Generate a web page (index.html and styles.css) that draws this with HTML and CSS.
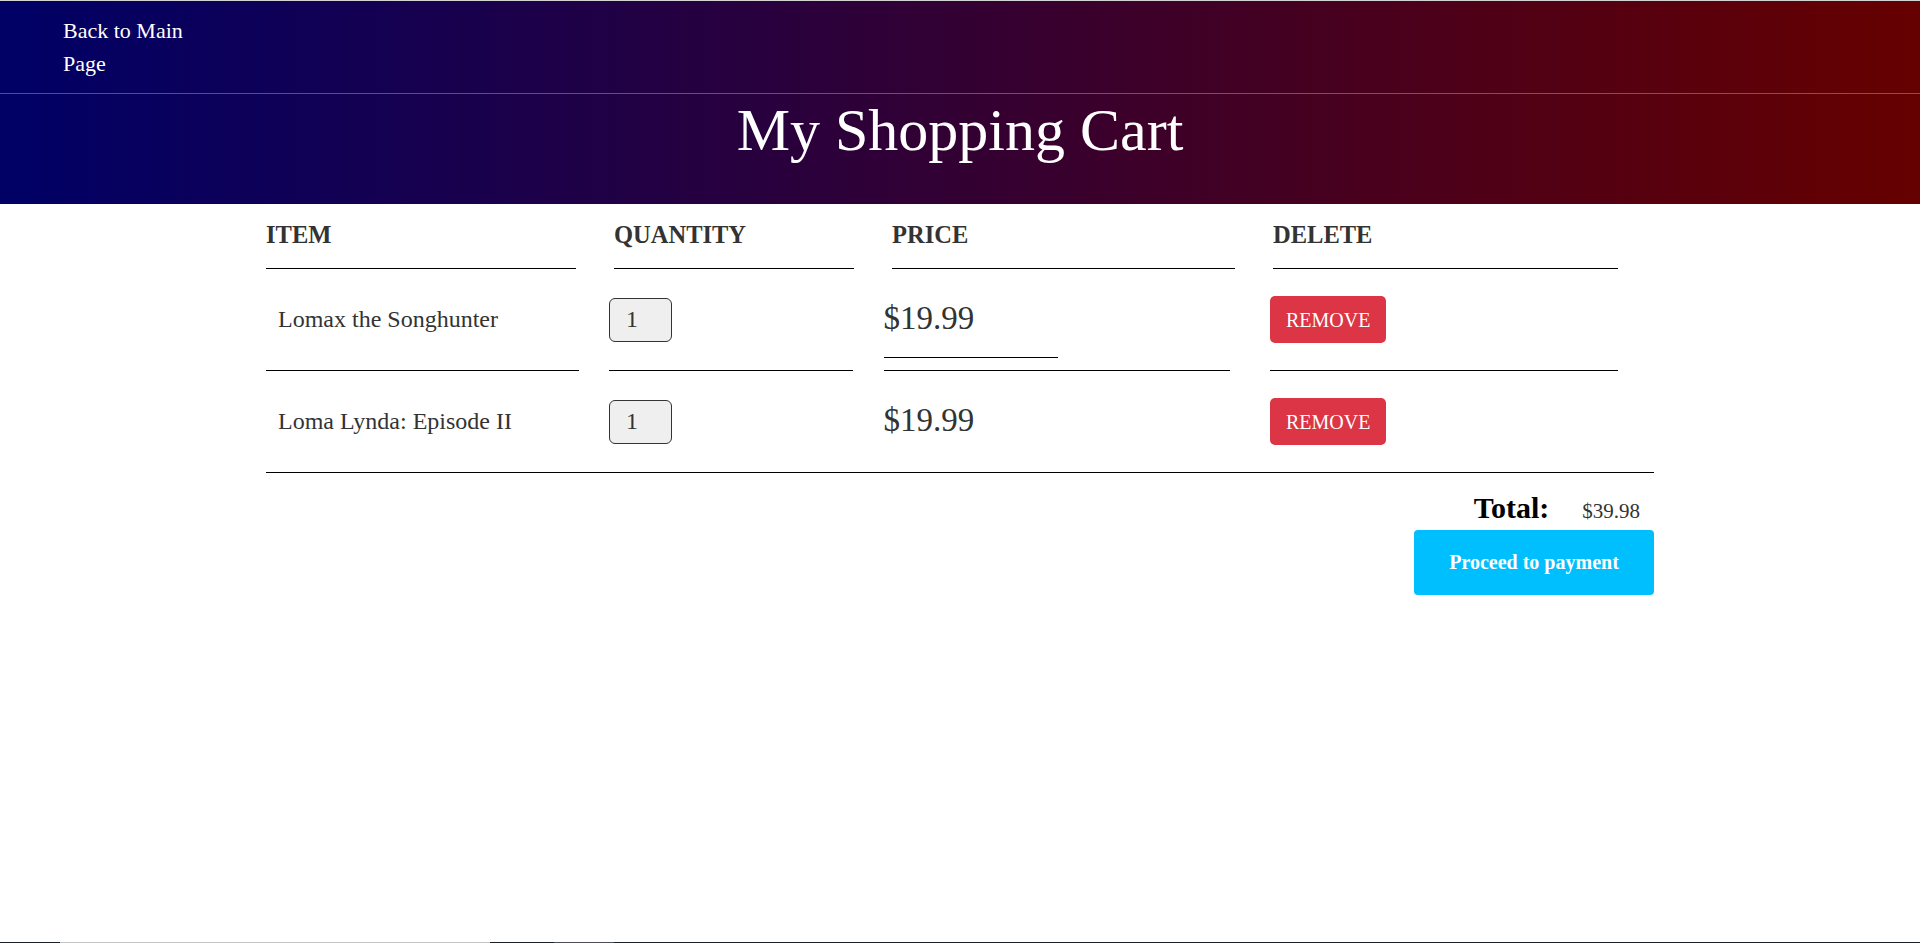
FILE: index.html
```html
<!DOCTYPE html>
<html lang="en">
<head>
<meta charset="utf-8">
<title>My Shopping Cart</title>
<link rel="stylesheet" href="styles.css">
</head>
<body>
<div class="page">
  <header class="hero">
    <nav class="topnav">
      <a class="nav-link" href="#">Back to Main Page</a>
    </nav>
    <h1 class="title">My Shopping Cart</h1>
  </header>

  <main class="main">
    <section class="cart">
      <div class="cart-head">
        <div class="th th-item">ITEM</div>
        <div class="th th-qty">QUANTITY</div>
        <div class="th th-price">PRICE</div>
        <div class="th th-del">DELETE</div>
      </div>

      <div class="row row-first">
        <div class="cell cell-item">Lomax the Songhunter</div>
        <div class="cell cell-qty"><input class="qty" type="text" value="1"></div>
        <div class="cell cell-price">
          <span class="price">$19.99</span>
          <span class="price-rule"></span>
        </div>
        <div class="cell cell-del"><button class="btn-remove">REMOVE</button></div>
      </div>

      <div class="row row-last">
        <div class="cell cell-item">Loma Lynda: Episode II</div>
        <div class="cell cell-qty"><input class="qty" type="text" value="1"></div>
        <div class="cell cell-price">
          <span class="price">$19.99</span>
        </div>
        <div class="cell cell-del"><button class="btn-remove">REMOVE</button></div>
      </div>

      <div class="summary">
        <div class="total-row">
          <span class="total-label">Total:</span>
          <span class="total-value">$39.98</span>
        </div>
        <button class="pay">Proceed to payment</button>
      </div>
    </section>
  </main>

  <footer class="footer">
    <span class="strip strip-light"></span>
    <span class="strip strip-mid"></span>
  </footer>
</div>
</body>
</html>
```

FILE: styles.css
```css
* {
  box-sizing: border-box;
}

html, body {
  margin: 0;
  padding: 0;
}

body {
  font-family: "Liberation Serif", "Times New Roman", serif;
  color: #333;
  background: #fff;
}

.page {
  min-height: 943px;
  display: flex;
  flex-direction: column;
}

/* ---------- header ---------- */
.hero {
  border-top: 1px solid #d3d3d3;
  background: linear-gradient(to right, #000066, #660000);
  color: #fff;
}

.topnav {
  padding: 13px 63px;
  border-bottom: 1px solid rgba(255, 255, 255, 0.3);
}

.nav-link {
  display: block;
  width: 130px;
  font-size: 22px;
  line-height: 33px;
  color: #fff;
  text-decoration: none;
}

.title {
  margin: 0;
  padding: 2px 0 40px;
  text-align: center;
  font-weight: normal;
  font-size: 60px;
  line-height: 68px;
}

/* ---------- cart ---------- */
.main {
  flex: 1;
}

.cart {
  width: 1388px;
  margin: 0 auto;
}

.cart-head {
  display: flex;
}

.th {
  font-size: 24.5px;
  font-weight: bold;
  line-height: 28px;
  padding: 17px 0 19px;
  border-bottom: 1px solid #000;
  color: #333;
}

.th-item { width: 310px; }
.th-qty { width: 240px; margin-left: 38px; }
.th-price { width: 343px; margin-left: 38px; }
.th-del { width: 345px; margin-left: 38px; }

.row {
  display: flex;
}

.cell {
  height: 102px;
  display: flex;
  align-items: center;
}

.row-first .cell {
  border-bottom: 1px solid #000;
}

.row-last {
  border-bottom: 1px solid #000;
}

.row-last .cell {
  height: 101px;
}

.cell-item {
  width: 313px;
  padding-left: 12px;
  font-size: 24px;
  color: #333;
}

.cell-qty {
  width: 244px;
  margin-left: 30px;
}

.cell-price {
  width: 346.5px;
  margin-left: 30.5px;
  flex-direction: column;
  align-items: flex-start;
  padding-top: 30px;
}

.cell-del {
  width: 348px;
  margin-left: 40px;
}

.qty {
  width: 63px;
  height: 44px;
  border: 1px solid #333;
  border-radius: 6px;
  background: #efefef;
  font-family: "Liberation Serif", "Times New Roman", serif;
  font-size: 24px;
  color: #333;
  padding: 0 0 0 16px;
  outline: none;
}

.price {
  display: block;
  font-size: 33px;
  line-height: 38px;
  color: #333;
}

.price-rule {
  display: block;
  width: 174px;
  height: 1px;
  margin-top: 20px;
  background: #000;
}

.btn-remove {
  background: #dc3545;
  color: #fff;
  border: 0;
  border-radius: 5px;
  font-family: "Liberation Serif", "Times New Roman", serif;
  font-size: 20px;
  line-height: 30px;
  padding: 8.5px 16px;
  cursor: pointer;
}

/* ---------- summary ---------- */
.summary {
  display: flex;
  flex-direction: column;
  align-items: flex-end;
  padding-top: 18px;
}

.total-row {
  display: flex;
  align-items: baseline;
  gap: 33px;
  padding-right: 14px;
}

.total-label {
  font-size: 30px;
  line-height: 34px;
  font-weight: bold;
  color: #000;
}

.total-value {
  font-size: 21px;
  color: #333;
}

.pay {
  width: 240px;
  height: 65px;
  margin-top: 5px;
  background: #00bfff;
  color: #fff;
  border: 0;
  border-radius: 4px;
  font-family: "Liberation Serif", "Times New Roman", serif;
  font-size: 20px;
  font-weight: bold;
  cursor: pointer;
}

/* ---------- footer edge ---------- */
.footer {
  height: 1px;
  display: flex;
  padding-left: 60px;
  background: #1c2128;
}

.strip {
  display: block;
  height: 1px;
}

.strip-light {
  width: 430px;
  background: #c4c4c4;
}

.strip-mid {
  width: 60px;
  margin-left: 64px;
  background: #4b4f55;
}
```
